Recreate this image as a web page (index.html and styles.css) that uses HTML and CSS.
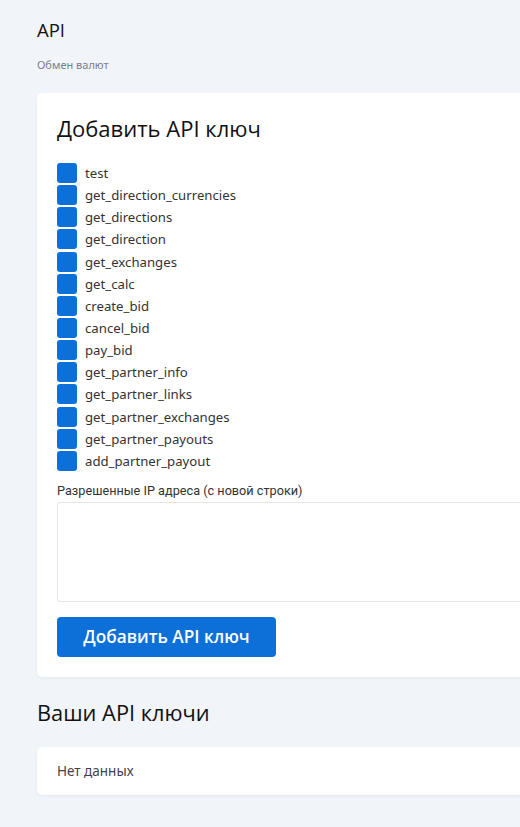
FILE: index.html
```html
<!DOCTYPE html>
<html lang="ru">
<head>
<meta charset="utf-8">
<title>API</title>
<link rel="stylesheet" href="styles.css">
</head>
<body>
<div class="viewport">
<main class="page">
  <header class="page-head">
    <h1 class="page-title">API</h1>
    <div class="crumb">Обмен валют</div>
  </header>

  <section class="card add-card">
    <h2 class="card-title">Добавить API ключ</h2>
    <ul class="perm-list">
      <li class="perm"><span class="box"></span><span class="perm-name">test</span></li>
      <li class="perm"><span class="box"></span><span class="perm-name">get_direction_currencies</span></li>
      <li class="perm"><span class="box"></span><span class="perm-name">get_directions</span></li>
      <li class="perm"><span class="box"></span><span class="perm-name">get_direction</span></li>
      <li class="perm"><span class="box"></span><span class="perm-name">get_exchanges</span></li>
      <li class="perm"><span class="box"></span><span class="perm-name">get_calc</span></li>
      <li class="perm"><span class="box"></span><span class="perm-name">create_bid</span></li>
      <li class="perm"><span class="box"></span><span class="perm-name">cancel_bid</span></li>
      <li class="perm"><span class="box"></span><span class="perm-name">pay_bid</span></li>
      <li class="perm"><span class="box"></span><span class="perm-name">get_partner_info</span></li>
      <li class="perm"><span class="box"></span><span class="perm-name">get_partner_links</span></li>
      <li class="perm"><span class="box"></span><span class="perm-name">get_partner_exchanges</span></li>
      <li class="perm"><span class="box"></span><span class="perm-name">get_partner_payouts</span></li>
      <li class="perm"><span class="box"></span><span class="perm-name">add_partner_payout</span></li>
    </ul>
    <label class="ip-label">Разрешенные IP адреса (с новой строки)</label>
    <div class="ip-area"></div>
    <button class="btn-primary" type="button">Добавить API ключ</button>
  </section>

  <h2 class="section-title">Ваши API ключи</h2>
  <section class="card empty-card">
    <div class="empty">Нет данных</div>
  </section>
</main>
</div>
</body>
</html>
```

FILE: styles.css
```css
* { box-sizing: border-box; }
html, body {
  margin: 0;
  padding: 0;
  background: #f1f4f9;
}
body {
  font-family: "Noto Sans", "Open Sans", sans-serif;
  color: #222;
}
.viewport {
  width: 520px;
  height: 827px;
  overflow: hidden;
}
.page {
  width: 580px;
  padding: 0 0 0 37px;
}
.page-head {
  padding-top: 18px;
}
.page-title {
  margin: 0;
  font-family: "Open Sans", sans-serif;
  font-weight: 400;
  font-size: 18.5px;
  line-height: 24px;
  color: #111;
}
.crumb {
  margin-top: 15px;
  font-size: 11px;
  line-height: 16px;
  color: #7a7f8c;
}
.card {
  background: #fff;
  border-radius: 5px;
  box-shadow: 0 1px 3px rgba(30, 50, 90, 0.06);
}
.add-card {
  margin-top: 20px;
  padding: 20px;
  display: flex;
  flex-direction: column;
  height: 584px;
}
.card-title {
  margin: 0;
  font-family: "Open Sans", sans-serif;
  font-weight: 400;
  font-size: 22px;
  line-height: 30px;
  color: #111;
}
.perm-list {
  list-style: none;
  margin: 20px 0 0 0;
  padding: 0;
  display: flex;
  flex-direction: column;
  gap: 2.15px;
}
.perm {
  display: flex;
  align-items: center;
  gap: 8px;
  height: 20px;
}
.box {
  width: 20px;
  height: 20px;
  border-radius: 3px;
  background: #0d6fd8;
  flex: none;
}
.perm-name {
  font-family: "Noto Sans", sans-serif;
  font-size: 13.2px;
  color: #333;
  line-height: 20px;
}
.ip-label {
  margin-top: 12px;
  font-family: "Roboto", sans-serif;
  font-size: 12.7px;
  line-height: 16px;
  color: #333;
}
.ip-area {
  margin-top: 3px;
  height: 100px;
  width: 520px;
  border: 1px solid #e2e4ea;
  border-radius: 3px;
}
.btn-primary {
  margin-top: 15px;
  align-self: flex-start;
  width: 219px;
  height: 40px;
  border: none;
  border-radius: 4px;
  background: #0d6fd8;
  color: #fff;
  font-family: "Open Sans", sans-serif;
  font-weight: 600;
  font-size: 17.2px;
}
.section-title {
  margin: 22px 0 0 0;
  font-family: "Open Sans", sans-serif;
  font-weight: 400;
  font-size: 21.8px;
  line-height: 28px;
  color: #111;
}
.empty-card {
  margin-top: 20px;
  height: 48px;
  padding: 0 20px;
  display: flex;
  align-items: center;
}
.empty {
  font-size: 13.5px;
  color: #444;
}
```
